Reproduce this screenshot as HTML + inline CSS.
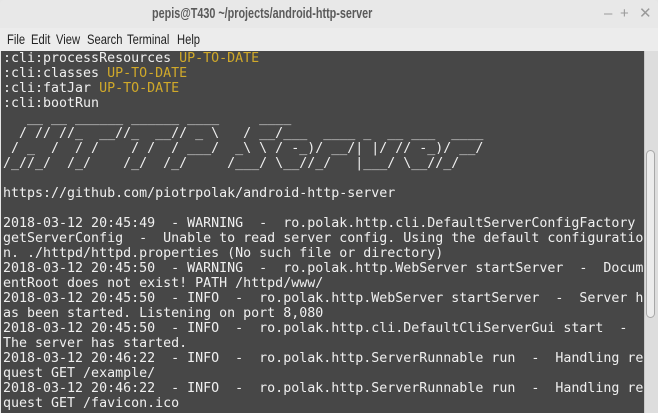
<!DOCTYPE html>
<html><head><meta charset="utf-8"><style>
body{margin:0;width:658px;height:413px;overflow:hidden;background:#e6e6e6;font-family:"Liberation Sans","DejaVu Sans",sans-serif;position:relative}
.title{position:absolute;left:0;top:0;width:658px;height:28px;background:#e8e8e8;border-radius:4px 4px 0 0}
.tt{position:absolute;left:152px;top:0;line-height:28px;font-size:15px;font-weight:bold;color:#5a5a5a;white-space:nowrap;transform-origin:0 50%;transform:scaleX(0.72)}
.ctl{position:absolute;top:0;line-height:28px;color:#9a9a9a;font-size:15px}
.menu{position:absolute;left:0;top:28px;width:658px;height:23px;background:#ececec;font-size:14px;color:#222;line-height:20px}
.menu span{position:absolute;top:1px;transform-origin:0 50%;transform:scaleX(0.8)}
.term{position:absolute;left:1px;top:51px;width:643px;height:362px;background:#474747;overflow:hidden}
pre{margin:0;padding:0 0 0 2px;font-family:"DejaVu Sans Mono","Liberation Mono",monospace;font-size:13.3px;line-height:15px;color:#f0f0f0;white-space:pre}
.y{color:#d0a92a}
.sb{position:absolute;left:644px;top:51px;width:13px;height:362px;background:#ddd;border-left:1px solid #c8c8c8}
.th{position:absolute;left:646px;top:150px;width:9px;height:168px;background:#ececec;border:1px solid #a8a8a8;border-radius:5px;box-sizing:border-box}
</style></head><body>
<div class="title"><span class="tt">pepis@T430 ~/projects/android-http-server</span>
<span class="ctl" style="left:604px">–</span><span class="ctl" style="left:620px">+</span><span class="ctl" style="left:639px">✕</span></div>
<div class="menu"><span style="left:7px">File</span><span style="left:31px">Edit</span><span style="left:56px">View</span><span style="left:87px">Search</span><span style="left:127px">Terminal</span><span style="left:177px">Help</span></div>
<div class="term"><pre>:cli:processResources <span class="y">UP-TO-DATE</span>
:cli:classes <span class="y">UP-TO-DATE</span>
:cli:fatJar <span class="y">UP-TO-DATE</span>
:cli:bootRun
   __ __ ______ ______ ____     ____
  / // //_  __//_  __// _ \   / __/___  ____ _  __ ___  ____
 / _  /  / /    / /  / ___/  _\ \ / -_)/ __/| |/ // -_)/ __/
/_//_/  /_/    /_/  /_/     /___/ \__//_/   |___/ \__//_/

https://github.com/piotrpolak/android-http-server

2018-03-12 20:45:49  - WARNING  -  ro.polak.http.cli.DefaultServerConfigFactory
getServerConfig  -  Unable to read server config. Using the default configuratio
n. ./httpd/httpd.properties (No such file or directory)
2018-03-12 20:45:50  - WARNING  -  ro.polak.http.WebServer startServer  -  Docum
entRoot does not exist! PATH /httpd/www/
2018-03-12 20:45:50  - INFO  -  ro.polak.http.WebServer startServer  -  Server h
as been started. Listening on port 8,080
2018-03-12 20:45:50  - INFO  -  ro.polak.http.cli.DefaultCliServerGui start  -
The server has started.
2018-03-12 20:46:22  - INFO  -  ro.polak.http.ServerRunnable run  -  Handling re
quest GET /example/
2018-03-12 20:46:22  - INFO  -  ro.polak.http.ServerRunnable run  -  Handling re
quest GET /favicon.ico</pre></div>
<div class="sb"></div><div class="th"></div>
</body></html>
